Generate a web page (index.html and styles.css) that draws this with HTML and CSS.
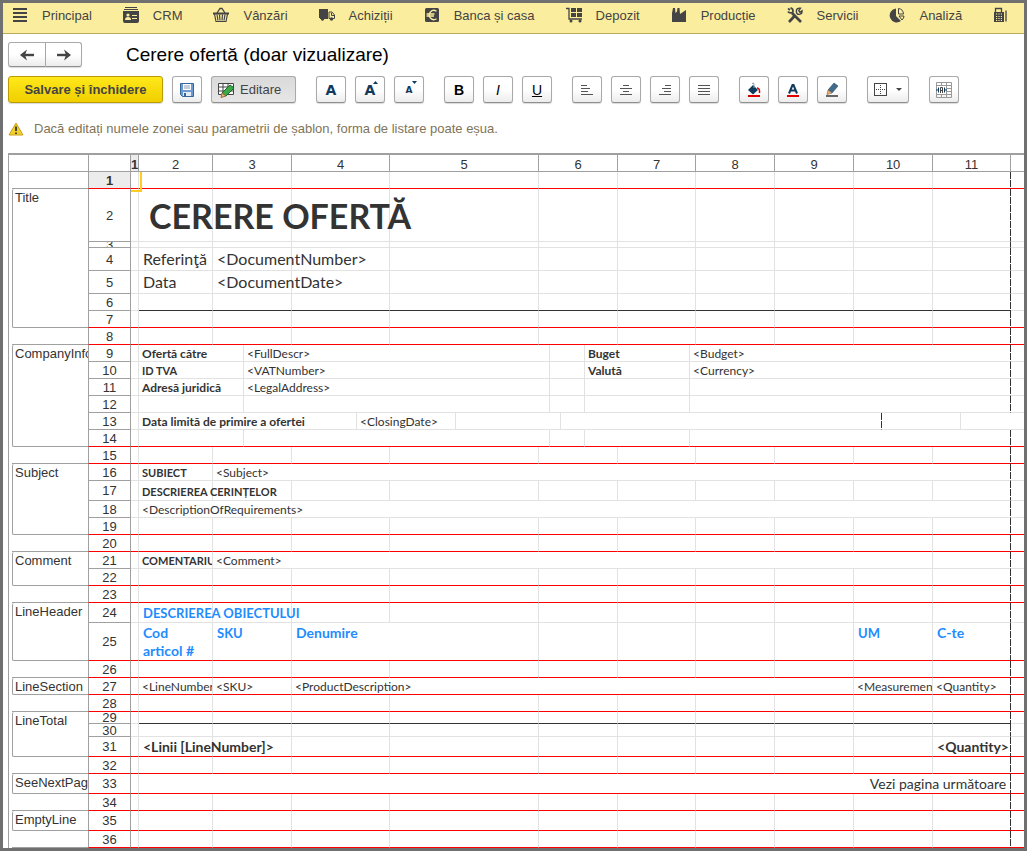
FILE: index.html
```
<!DOCTYPE html>
<html lang="ro">
<head>
    <meta charset="UTF-8">
    <meta name="viewport" content="width=device-width, initial-scale=1.0">
    <title>Cerere ofertă</title>
    <link rel="stylesheet" href="styles.css">
</head>
<body>
<div class="window">
    <nav class="sections">
        <a href="#principal">
            <svg width="16" height="16" viewBox="0 0 16 16"><path d="M1 2h14M1 6h14M1 10h14M1 14h14" stroke="currentColor" stroke-width="2"/></svg>
            Principal
        </a>
        <a href="#crm">
            <svg width="16" height="16" viewBox="0 0 16 16"><path d="M2 0h12v1H2zM1 2h14v1H1zM0 4h16v10q0 2-2 2H2q-2 0-2-2z" fill="currentColor"/><circle cx="5" cy="8" r="1.6" fill="#fbed9e"/><path d="M2 13q0-3 3-3t3 3zM9 8h5v1H9zM9 11h5v1H9z" fill="#fbed9e"/></svg>
            CRM
        </a>
        <a href="#vanzari">
            <svg width="16" height="16" viewBox="0 0 16 16" fill="none" stroke="currentColor"><path d="M4 6l3-4.500h2l3 4.500" stroke-width="1.300"/><path d="M0 6.500h16" stroke-width="2"/><path d="M1.500 7l1.500 7.500h10l1.500-7.500M4 7.500l1 6M6.500 7.500l.5 6M9.500 7.500l-.5 6M12 7.500l-1 6" stroke-width="1.200"/></svg>
            Vânzări
        </a>
        <a href="#achizitii">
            <svg width="16" height="16" viewBox="0 0 16 16"><path d="M0 2h9v9H0zM1 11h8v1H1z" fill="currentColor"/><path d="M10 5h3l2.500 3v3.500H10z" fill="none" stroke="currentColor"/><path d="M12.500 6v2.500H15" fill="none" stroke="currentColor"/><circle cx="3.500" cy="12" r="1.700" fill="currentColor"/><circle cx="12.500" cy="12" r="1.700" fill="currentColor"/></svg>
            Achiziții
        </a>
        <a href="#banca">
            <svg width="16" height="16" viewBox="0 0 16 16"><rect x="1" y="1" width="14" height="14" rx="1.500" fill="currentColor"/><path d="M12.500 4.200A4.600 4.600 0 1 0 12.500 11.800M2.500 7h8M2.500 9h7.500" fill="none" stroke="#fbed9e" stroke-width="1.300"/></svg>
            Banca și casa
        </a>
        <a href="#depozit">
            <svg width="16" height="16" viewBox="0 0 16 16"><path d="M0 1.500h3V12h13" fill="none" stroke="currentColor" stroke-width="1.300"/><path d="M5 1h5v4H5zM11 1h5v4h-5zM5 6h5v4H5zM11 6h5v4h-5z" fill="currentColor"/><circle cx="5" cy="14" r="1.500" fill="currentColor"/><circle cx="14" cy="14" r="1.500" fill="currentColor"/></svg>
            Depozit
        </a>
        <a href="#productie">
            <svg width="16" height="16" viewBox="0 0 16 16"><path d="M1 15V6l1-5h2l.5 5L6 4.500 6.500 1h2l.5 6 6-4v12z" fill="currentColor"/></svg>
            Producție
        </a>
        <a href="#servicii">
            <svg width="16" height="16" viewBox="0 0 16 16" fill="none" stroke="currentColor"><path d="M5 6l9 9" stroke-width="2.600"/><path d="M3.500.8q3 1 2.500 4Q3 7 .8 4.500M3 3L1 1.500" stroke-width="1.600"/><path d="M2 15l6-6.500" stroke-width="2.600"/><path d="M13.500 1.200q-4-.7-4.200 3Q9.500 8 13 7.200q2.500-.7 2-3.500l-2 1.500-1.300-1.500z" stroke-width="1.400"/></svg>
            Servicii
        </a>
        <a href="#analiza">
            <svg width="16" height="16" viewBox="0 0 16 16"><path d="M7 1.500V9l5 5A7 7 0 1 1 7 1.500z" fill="currentColor"/><path d="M9.500 1.500V7h5Q14 2 9.500 1.500zM10 9h5q0 2-2 4z" fill="none" stroke="currentColor"/></svg>
            Analiză
        </a>
        <a href="#contabilitate" aria-label="Contabilitate">
            <svg width="16" height="16" viewBox="0 0 16 16"><path d="M2.500 5V1.500h6V5M13 3.500v11" fill="none" stroke="currentColor" stroke-width="1.300"/><path d="M1 5h10v10H1z" fill="currentColor"/><path d="M3 7h6M3 9.500h6M3 11.500h6M3 13.500h6" stroke="#fbed9e" stroke-dasharray="1.200 1.200"/></svg>
        </a>
    </nav>

    <header class="title-bar">
        <div class="history">
            <button type="button" aria-label="Înapoi"><svg width="16" height="12" viewBox="0 0 16 12"><path d="M15 6H4" stroke="#444" stroke-width="2.400"/><path d="M1 6l7-5.500L6 6l2 5.500z" fill="#444"/></svg></button>
            <button type="button" aria-label="Înainte"><svg width="16" height="12" viewBox="0 0 16 12"><path d="M1 6h11" stroke="#444" stroke-width="2.400"/><path d="M15 6L8 .5 10 6l-2 5.500z" fill="#444"/></svg></button>
        </div>
        <h1>Cerere ofertă (doar vizualizare)</h1>
    </header>

    <div class="toolbar">
        <div class="group">
            <button type="button" class="primary">Salvare și închidere</button>
            <button type="button" aria-label="Salvare">
                <svg width="16" height="16" viewBox="0 0 16 16"><path d="M1.500 1.500h13v13h-11l-2-2z" fill="#6c9bd2" stroke="#35679c"/><path d="M4 2h8v6H4z" fill="#fff"/><path d="M5 4h6M5 6h6" stroke="#8a9db0"/><path d="M4 10h8v4H4z" fill="#e4edf6"/><path d="M5 11h2v3H5z" fill="#35679c"/></svg>
            </button>
            <button type="button" class="pressed" aria-pressed="true">
                <svg width="18" height="16" viewBox="0 0 18 16"><path d="M1.500 1.500h15v11h-15zM1.500 5h15M1.500 9h15M6 1.500v11M11 1.500v11" fill="#fff" stroke="#444"/><path d="M5 11l8-8 4 3-8 8z" fill="#39a845" stroke="#1c6b2a"/><path d="M5 11l4 3-5 1.500z" fill="#e9b57c" stroke="#9a6a3a"/></svg>
                Editare
            </button>
        </div>
        <div class="group">
            <button type="button" class="glyph" aria-label="Font">A</button>
            <button type="button" class="glyph" aria-label="Mărire font">A<svg width="5" height="3" viewBox="0 0 5 3"><path d="M0 3h5L2.500 0z" fill="currentColor"/></svg></button>
            <button type="button" class="glyph small" aria-label="Micșorare font">A<svg width="5" height="3" viewBox="0 0 5 3"><path d="M0 0h5L2.500 3z" fill="currentColor"/></svg></button>
        </div>
        <div class="group">
            <button type="button" class="format"><b>B</b></button>
            <button type="button" class="format"><i>I</i></button>
            <button type="button" class="format"><u>U</u></button>
        </div>
        <div class="group">
            <button type="button" aria-label="Aliniere la stânga"><svg width="14" height="12" viewBox="0 0 14 12"><path d="M1 1.500h6M1 4.500h9M1 7.500h7M1 10.500h12" stroke="#555"/></svg></button>
            <button type="button" aria-label="Centrare"><svg width="14" height="12" viewBox="0 0 14 12"><path d="M4 1.500h6M1 4.500h12M4 7.500h6M1 10.500h12" stroke="#555"/></svg></button>
            <button type="button" aria-label="Aliniere la dreapta"><svg width="14" height="12" viewBox="0 0 14 12"><path d="M7 1.500h6M4 4.500h9M6 7.500h7M1 10.500h12" stroke="#555"/></svg></button>
            <button type="button" aria-label="Aliniere stânga-dreapta"><svg width="14" height="12" viewBox="0 0 14 12"><path d="M1 1.500h12M1 4.500h12M1 7.500h12M1 10.500h12" stroke="#555"/></svg></button>
        </div>
        <div class="group">
            <button type="button" aria-label="Culoare fundal"><svg width="14" height="16" viewBox="0 0 14 16"><path d="M6 3l5 5-5 4.500L1 8z" fill="#103a5c"/><path d="M5 1.500q2-1.500 2 1V6" fill="none" stroke="#8a9aa8"/><path d="M10 6q3 0 2.500 5" fill="none" stroke="#e00000" stroke-width="1.500"/><path d="M1 13h12v2H1z" fill="#e00000"/></svg></button>
            <button type="button" aria-label="Culoare text"><svg width="14" height="16" viewBox="0 0 14 16"><path d="M3 11.500L6.500 3h1L11 11.500M4.500 8.500h5" fill="none" stroke="#103a5c" stroke-width="2"/><path d="M1 13h12v2H1z" fill="#e00000"/></svg></button>
            <button type="button" aria-label="Culoare chenar"><svg width="14" height="16" viewBox="0 0 14 16"><path d="M3 8l6-7 4 3-6 7z" fill="#416a8b" stroke="#274a66" stroke-width=".6"/><path d="M3 8l4 3-5 1.500z" fill="#e9b57c" stroke="#8a6238" stroke-width=".6"/><path d="M1 13h12v2H1z" fill="#666"/></svg></button>
        </div>
        <div class="group">
            <button type="button" class="menu" aria-label="Chenare"><svg width="14" height="14" viewBox="0 0 14 14" fill="none" stroke="#444"><rect x=".5" y=".5" width="12" height="12"/><path d="M6.500 2v10M2 6.500h10" stroke-dasharray="1 1"/></svg><svg width="6" height="3" viewBox="0 0 6 3"><path d="M0 0h6L3 3z" fill="#444"/></svg></button>
        </div>
        <div class="group">
            <button type="button" aria-label="Unire celule"><svg width="16" height="16" viewBox="0 0 16 16" fill="none"><path d="M.5.5h15v15H.5zM.5 3.500h15M.5 12.500h15M5.500.5v3M10.500.5v15M5.500 12.500v3M11 6.500h4.500M11 9.500h4.500" stroke="#999"/><path d="M1 4h9v8H1z" fill="#fff"/><path d="M0 8h2M2.500 5.500v5M9 8h2M8.500 5.500v5" stroke="#103a5c"/><path d="M4.500 11V5.500h2V11M4.500 8.500h2" stroke="#444"/></svg></button>
        </div>
    </div>

    <p class="warning">
        <svg width="16" height="14" viewBox="0 0 16 14"><path d="M8 1l7 12H1z" fill="#f2cf2c" stroke="#c9a21a" stroke-linejoin="round"/><path d="M8 4.500V9M8 10.500V12" stroke="#333" stroke-width="1.800"/></svg>
        Dacă editați numele zonei sau parametrii de șablon, forma de listare poate eșua.
    </p>

    <main class="sheet">
        <table id="template">
            <colgroup></colgroup>
            <thead></thead>
            <tbody></tbody>
        </table>
    </main>
</div>
<script src="sheet.js"></script>
</body>
</html>
```
FILE: styles.css
```
* {
    margin: 0;
    padding: 0;
    box-sizing: border-box;
}

body {
    font-family: "Liberation Sans", Arial, sans-serif;
    font-size: 13px;
    color: #333;
    background: white;
}

.window {
    display: flex;
    flex-direction: column;
    height: 100vh;
    border: 3px solid #6f706f;
    overflow: hidden;
}

/* Section bar */
.sections {
    display: flex;
    flex-shrink: 0;
    gap: 31px;
    height: 31px;
    padding: 0 9px 6px;
    background: #fbed9e;
    border-bottom: 1px solid #b8a95d;
    overflow: hidden;
}

.sections a {
    display: flex;
    align-items: center;
    flex-shrink: 0;
    gap: 14px;
    color: #444;
    text-decoration: none;
    white-space: nowrap;
}

/* Title */
.title-bar {
    display: flex;
    align-items: center;
    flex-shrink: 0;
    gap: 44px;
    padding: 8px 5px 0;
}

h1 {
    font-size: 19px;
    font-weight: normal;
    line-height: 25px;
    color: black;
    white-space: nowrap;
}

button {
    display: flex;
    align-items: center;
    justify-content: center;
    height: 27px;
    min-width: 30px;
    font: inherit;
    color: #444;
    background: linear-gradient(#fff 50%, #ececec);
    border: 1px solid #a9a9a9;
    border-bottom-color: #8f8f8f;
    border-radius: 3px;
    box-shadow: 0 1px 1px rgba(0, 0, 0, 0.15);
    cursor: pointer;
}

.history {
    display: flex;
}

.history button {
    width: 36px;
    height: 25px;
}

.history button:first-child {
    width: 38px;
    border-radius: 3px 0 0 3px;
}

.history button:last-child {
    border-left: none;
    border-radius: 0 3px 3px 0;
}

/* Toolbar */
.toolbar {
    display: flex;
    flex-shrink: 0;
    gap: 20px;
    padding: 9px 5px 0;
}

.group {
    display: flex;
    gap: 9px;
}

.primary {
    width: 155px;
    font-weight: bold;
    white-space: nowrap;
    background: linear-gradient(#ffe81a, #f0cf00);
    border-color: #b89c00;
}

.pressed {
    justify-content: flex-start;
    gap: 5px;
    width: 85px;
    padding-left: 5px;
    background: linear-gradient(#dadada, #e6e6e6);
}

.glyph {
    position: relative;
    font-family: "DejaVu Sans", sans-serif;
    font-size: 14px;
    font-weight: bold;
    color: #103a5c;
}

.glyph svg {
    position: absolute;
    top: 4px;
    right: 6px;
}

.small {
    font-size: 9px;
}

.format {
    font-size: 14px;
    color: black;
}

.menu {
    gap: 8px;
    width: 42px;
}

.warning {
    display: flex;
    align-items: center;
    flex-shrink: 0;
    gap: 10px;
    padding: 18px 5px 16px;
    line-height: 16px;
    color: #7f7458;
    white-space: nowrap;
}

/* Spreadsheet */
.sheet {
    flex: 1;
    margin-left: 5px;
    border-top: 2px solid #a0a0a0;
    border-left: 1px solid #a0a0a0;
    overflow: hidden;
}

table {
    width: 100%;
    table-layout: fixed;
    border-collapse: separate;
    border-spacing: 0;
}

td, th {
    border: 0 solid #e2e2e2;
    border-width: 0 1px 1px 0;
    font-weight: normal;
    text-align: left;
    line-height: 12px;
    white-space: nowrap;
}

thead th {
    height: 17px;
    padding-top: 3px;
    border-color: #a0a0a0;
    text-align: center;
}

thead th:last-child {
    border-right: none;
}

.spacer {
    border: none;
}

.gap {
    border-width: 0 0 1px;
    border-color: #a0a0a0;
}

.zone {
    padding: 1px 2px 0;
    border: 1px solid #a0a0a0;
    border-width: 0 0 1px 1px;
    border-radius: 2px 0 0 2px;
    line-height: 15px;
    vertical-align: top;
    overflow: hidden;
}

.number {
    padding-top: 1px;
    border-color: #a0a0a0;
    border-left-width: 1px;
    line-height: 10px;
    text-align: center;
    overflow: hidden;
}

.number.current, thead .current {
    font-weight: bold;
    background: #ececec;
}

.red .number, .red .cell {
    border-bottom-color: #f00;
}

.rule .cell {
    border-bottom-color: #333;
}

.rule .cell:last-child, .rule .number + .cell {
    border-bottom-color: #e2e2e2;
}

.low .number {
    line-height: 4px;
}

.cell {
    padding: 2px 3px 0;
    font-family: Lato, "Open Sans", sans-serif;
    font-size: 12px;
}

.low .cell {
    padding-top: 0;
}

.cell:last-child {
    border-right: none;
}

/* Page boundary */
.page-end {
    border-right-color: transparent;
    background: repeating-linear-gradient(#333 0 7px, transparent 7px 8px) right / 1px 100% no-repeat border-box;
}

.cursor {
    position: relative;
}

.cursor::after {
    content: '';
    position: absolute;
    top: 0;
    left: 0;
    width: 9px;
    height: 18px;
    border: 2px solid #fc2;
    border-width: 0 2px 2px 0;
    z-index: 1;
}

.bold, .caps, .heading, .total {
    font-weight: bold;
}

.cell.caps {
    font-size: 11px;
}

.clip {
    overflow: hidden;
    text-overflow: clip;
    padding-right: 0;
}

.title {
    padding-left: 10px;
    font-size: 34px;
    font-weight: bold;
}

.field {
    padding: 0 4px;
    font-size: 16px;
}

.heading {
    padding: 1px 4px 0;
    font-size: 14px;
    line-height: 18px;
    color: #1e8cff;
    vertical-align: top;
    white-space: pre-line;
}

.cell.heading.caps {
    font-size: 13px;
    white-space: nowrap;
}

.total {
    padding: 0 4px;
    font-size: 14px;
}

.right {
    text-align: right;
}

.next {
    padding: 0 4px;
    font-size: 14px;
    text-align: right;
}
```
FILE: sheet.js
```
// Column widths of the finest grid, the last one takes what is left
const widths = [8, 74, 31, 48, 65, 33, 66, 83, 11, 11, 24, 33, 72, 6, 79, 79, 28, 51, 28, 50];

// How many fine columns each cell of a row takes
const grids = {
  main: [1, 1, 2, 2, 2, 4, 2, 1, 1, 2, 2, 1],
  company: [1, 2, 6, 2, 2, 7, 1],
  closing: [1, 4, 2, 3, 7, 2, 2],
  subject: [1, 1, 18, 1],
  wide: [1, 19, 1],
  comment: [1, 1, 16, 2, 1],
  header: [1, 1, 2, 4, 4, 2, 1, 1, 2, 2, 1],
  line: [1, 1, 2, 12, 2, 2, 1]
};

const rows = [
  { h: 17, line: 'red', cells: { 0: ['', 'cursor'] } },
  { h: 53, zone: ['Title', 6], cells: { 1: ['CERERE OFERTĂ', 'title'] } },
  { h: 6, line: 'low' },
  { h: 23, cells: { 1: ['Referinţă', 'field'], 2: ['<DocumentNumber>', 'field'] } },
  { h: 23, cells: { 1: ['Data', 'field'], 2: ['<DocumentDate>', 'field'] } },
  { h: 17, line: 'rule' },
  { h: 17, line: 'red' },
  { h: 17, line: 'red' },
  { h: 17, zone: ['CompanyInfo', 6], grid: 'company', cells: { 1: ['Ofertă către', 'bold'], 2: ['<FullDescr>'], 4: ['Buget', 'bold'], 5: ['<Budget>'] } },
  { h: 17, grid: 'company', cells: { 1: ['ID TVA', 'caps'], 2: ['<VATNumber>'], 4: ['Valută', 'bold'], 5: ['<Currency>'] } },
  { h: 17, grid: 'company', cells: { 1: ['Adresă juridică', 'bold'], 2: ['<LegalAddress>'] } },
  { h: 17, grid: 'company' },
  { h: 17, grid: 'closing', pageEnd: 4, cells: { 1: ['Data limită de primire a ofertei', 'bold'], 2: ['<ClosingDate>'] } },
  { h: 17, grid: 'company', line: 'red' },
  { h: 17, line: 'red' },
  { h: 17, zone: ['Subject', 4], grid: 'subject', cells: { 1: ['SUBIECT', 'caps'], 2: ['<Subject>'] } },
  { h: 20, cells: { 1: ['DESCRIEREA CERINȚELOR', 'caps'] } },
  { h: 17, grid: 'wide', cells: { 1: ['<DescriptionOfRequirements>'] } },
  { h: 17, line: 'red' },
  { h: 17, line: 'red' },
  { h: 17, zone: ['Comment', 2], grid: 'comment', cells: { 1: ['COMENTARIU', 'caps clip'], 2: ['<Comment>'] } },
  { h: 17, line: 'red' },
  { h: 17, line: 'red' },
  { h: 20, zone: ['LineHeader', 2], cells: { 1: ['DESCRIEREA OBIECTULUI', 'heading caps'] } },
  { h: 38, grid: 'header', line: 'red', cells: { 1: ['Cod\narticol #', 'heading'], 2: ['SKU', 'heading caps'], 3: ['Denumire', 'heading'], 8: ['UM', 'heading caps'], 9: ['C-te', 'heading'] } },
  { h: 17, line: 'red' },
  { h: 17, zone: ['LineSection', 1], grid: 'line', line: 'red', cells: { 1: ['<LineNumber>', 'clip'], 2: ['<SKU>'], 3: ['<ProductDescription>'], 4: ['<Measurement>', 'clip'], 5: ['<Quantity>'] } },
  { h: 17, line: 'red' },
  { h: 12, zone: ['LineTotal', 3], line: 'rule' },
  { h: 13 },
  { h: 20, line: 'red', cells: { 1: ['<Linii [LineNumber]>', 'total'], 10: ['<Quantity>', 'total right'] } },
  { h: 17, line: 'red' },
  { h: 20, zone: ['SeeNextPage', 1], grid: 'wide', line: 'red', cells: { 1: ['Vezi pagina următoare', 'next'] } },
  { h: 17, line: 'red' },
  { h: 20, zone: ['EmptyLine', 1], line: 'red' },
  { h: 17, line: 'red' }
];

const table = document.getElementById('template');

function add(parent, tag, className, text) {
  const element = document.createElement(tag);
  if (className) element.className = className;
  if (text) element.textContent = text;
  parent.appendChild(element);
  return element;
}

// Columns: margin, zone names, row numbers, then the grid
const colgroup = table.querySelector('colgroup');
[3, 76, 43, ...widths].forEach(width => {
  add(colgroup, 'col').style.width = width + 'px';
});
add(colgroup, 'col');

// Header with column numbers
const head = add(table.tHead, 'tr');
add(head, 'td', 'gap').colSpan = 2;
add(head, 'th', 'number');
grids.main.forEach((span, i) => {
  const th = add(head, 'th', i === 0 ? 'current' : '', i < 11 ? String(i + 1) : '');
  th.scope = 'col';
  th.colSpan = span;
});

// Body
let zoneRows = 0;
rows.forEach((row, index) => {
  const tr = add(table.tBodies[0], 'tr', row.line);
  tr.style.height = row.h + 'px';
  add(tr, 'td', 'spacer');

  if (row.zone) {
    add(tr, 'td', 'zone', row.zone[0]).rowSpan = row.zone[1];
    zoneRows = row.zone[1];
  } else if (zoneRows === 0) {
    add(tr, 'td', 'gap');
  }
  if (zoneRows > 0) zoneRows--;

  add(tr, 'th', index === 0 ? 'number current' : 'number', String(index + 1)).scope = 'row';

  const grid = grids[row.grid || 'main'];
  const pageEnd = row.pageEnd || grid.length - 2;
  grid.forEach((span, i) => {
    const [text, className] = (row.cells && row.cells[i]) || [];
    const td = add(tr, 'td', 'cell', text);
    td.colSpan = span;
    if (className) td.className += ' ' + className;
    if (i === pageEnd) td.className += ' page-end';
  });
});
```
